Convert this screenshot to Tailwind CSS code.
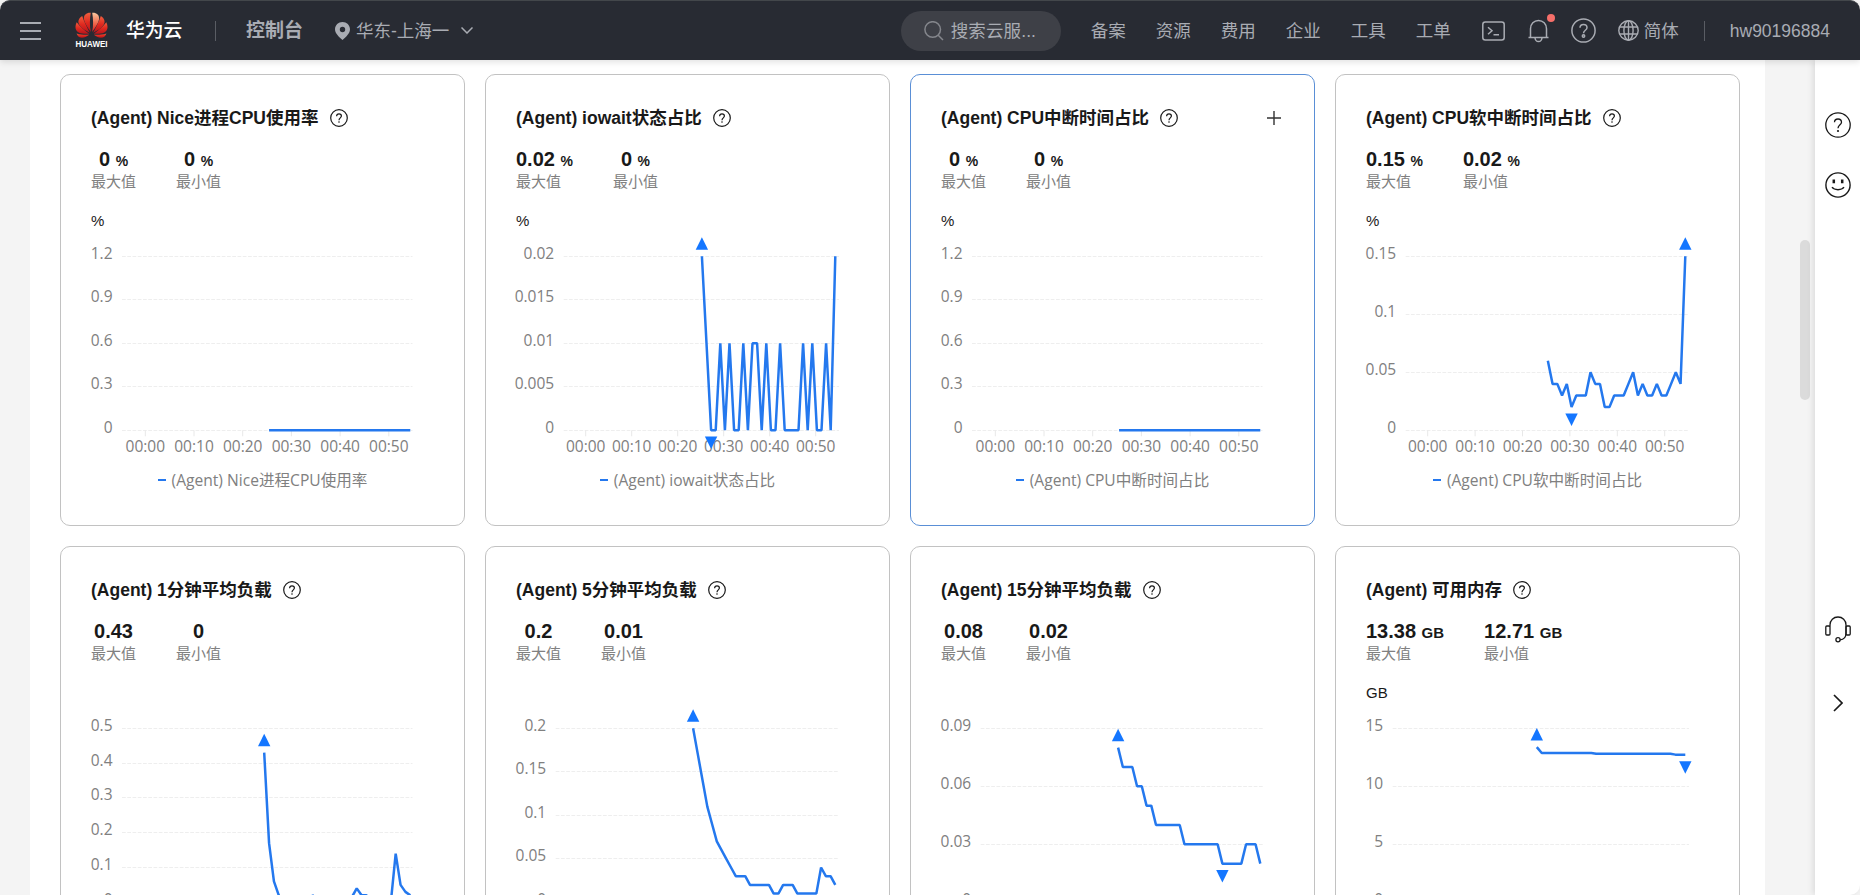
<!DOCTYPE html>
<html lang="zh-CN">
<head>
    <meta charset="UTF-8">
    <meta name="viewport" content="width=device-width, initial-scale=1.0">
    <title>云监控服务 - 控制台</title>
    <script src="https://cdn.jsdelivr.net/npm/@tailwindcss/browser@4"></script>
    <style>
        body {
            font-family: 'Liberation Sans', 'Noto Sans CJK SC', sans-serif;
        }
    </style>
</head>
<body class="h-screen overflow-hidden bg-[#f4f4f4] text-[#191919]">
<div class="flex h-[895px] flex-col overflow-hidden">

    <!-- 顶部导航 -->
    <header class="relative z-10 flex h-[60px] shrink-0 items-center rounded-t-[10px] border-t border-[#43474b] bg-[#282b33] text-[17.5px] leading-6 text-[#a9acb3] shadow-[0_2px_6px_rgba(0,0,0,0.12)]">
        <svg class="ml-5 h-[18px] w-[21px] shrink-0" viewBox="0 0 21 18" stroke="#a9acb3" stroke-width="2"><path d="M0 1h21M0 9h21M0 17h21"/></svg>
        <!-- 品牌标志 -->
        <svg class="ml-[34px] h-[38px] w-[33px] shrink-0" viewBox="0 1.5 33 38">
            <defs>
                <linearGradient id="petal" x1="0" y1="0" x2="0" y2="1"><stop offset="0" stop-color="#f0603f"/><stop offset=".5" stop-color="#e02a20"/><stop offset="1" stop-color="#b8131a"/></linearGradient>
                <linearGradient id="petalLight" x1="0" y1="0" x2="0" y2="1"><stop offset="0" stop-color="#fbc9a0"/><stop offset=".6" stop-color="#ee5f45"/><stop offset="1" stop-color="#cf1d1d"/></linearGradient>
            </defs>
            <g fill="url(#petal)">
                <path d="M15.900 21.600C14.400 15 14.800 8 15.800 2.200C11.800 1.800 8.400 4.200 8.900 8.500C9.500 12.500 13 17.500 15.900 21.600Z"/>
                <path d="M14.800 22.200C11.900 16.500 9 11 7.200 5.400C3.200 7.800 2.300 11.500 4.800 15C7 18 11.500 20.700 14.800 22.200Z"/>
                <path d="M14.200 23.200C9.800 20.300 5 16 1.700 11.800C-.5 16.300 .3 20.300 3.700 22C6.900 23.500 11 23.500 14.200 23.200Z"/>
                <path d="M14.200 24.200C10.500 24.600 5.500 24.300 1.600 22.900C2.400 25.600 4.500 27.200 7 27.200C9.700 27.100 12.300 25.600 14.200 24.200Z"/>
                <path d="M18.200 22.200C21.100 16.500 24 11 25.800 5.400C29.800 7.800 30.700 11.500 28.200 15C26 18 21.500 20.700 18.200 22.200Z"/>
                <path d="M18.800 23.200C23.200 20.300 28 16 31.300 11.800C33.500 16.300 32.700 20.300 29.300 22C26.100 23.500 22 23.500 18.800 23.200Z"/>
                <path d="M18.800 24.200C22.500 24.600 27.500 24.300 31.400 22.900C30.600 25.600 28.500 27.200 26 27.200C23.300 27.100 20.700 25.600 18.800 24.200Z"/>
            </g>
            <path fill="url(#petalLight)" d="M17.100 21.600C18.600 15 18.200 8 17.200 2.200C21.200 1.800 24.600 4.200 24.100 8.500C23.500 12.500 20 17.500 17.100 21.600Z"/>
            <text x="16.500" y="36" font-size="8.200" font-weight="700" fill="#fff" text-anchor="middle" textLength="32" lengthAdjust="spacingAndGlyphs">HUAWEI</text>
        </svg>
        <span class="ml-[18px] w-[57px] text-[18.8px] font-medium whitespace-nowrap text-white">华为云</span>
        <span class="ml-8 h-5 w-px bg-[#5a5d64]"></span>
        <span class="ml-[30px] w-[58px] text-[19px] font-bold whitespace-nowrap">控制台</span>
        <svg class="ml-[31px] h-[18px] w-[15px] shrink-0" viewBox="0 0 15 18" fill="#a9acb3"><path fill-rule="evenodd" d="M7.500 0C3.300 0 0 3.200 0 7.300C0 11.300 3.600 14.700 7.500 18C11.400 14.700 15 11.300 15 7.300C15 3.200 11.700 0 7.500 0ZM7.500 4.800a2.700 2.700 0 1 0 0 5.400a2.700 2.700 0 0 0 0-5.400Z"/></svg>
        <span class="ml-[6px] w-[94px] whitespace-nowrap">华东-上海一</span>
        <svg class="ml-[11px] h-[7px] w-[12px] shrink-0" viewBox="0 0 12 7" fill="none" stroke="#a9acb3" stroke-width="1.500"><path d="M.5 .5L6 6L11.500 .5"/></svg>

        <div class="mr-[30px] ml-auto flex h-10 w-40 shrink-0 items-center rounded-full bg-[#3e4047]">
            <svg class="ml-[23px] h-5 w-5 shrink-0" viewBox="0 0 20 20" fill="none" stroke="#84868c" stroke-width="1.500"><circle cx="8.700" cy="8.500" r="7.800"/><path d="M14.200 14.200L19 19"/></svg>
            <span class="ml-[7px] tracking-[0.1px] whitespace-nowrap">搜索云服...</span>
        </div>
        <nav class="flex gap-[30px] whitespace-nowrap">
            <span>备案</span><span>资源</span><span>费用</span><span>企业</span><span>工具</span><span>工单</span>
        </nav>
        <svg class="ml-[31px] h-5 w-[23px] shrink-0" viewBox="0 0 23 20" fill="none" stroke="#a9acb3" stroke-width="1.500"><rect x=".8" y="1" width="21.400" height="18" rx="2.500"/><path d="M6 6.200L10 9.700L6 13.200M11.500 13.800H17"/></svg>
        <div class="relative ml-[23px] h-6 w-[21px] shrink-0">
            <svg class="h-6 w-[21px]" viewBox="0 0 21 24" fill="none" stroke="#a9acb3" stroke-width="1.500"><path d="M.5 18.500H20.500M2.500 18.300V9.800C2.500 5 6 1.500 10.500 1.500S18.500 5 18.500 9.800V18.300M7 19C7.300 21.200 8.600 22.500 10.500 22.500S13.700 21.200 14 19"/></svg>
            <span class="absolute -top-[5px] left-[19px] h-2 w-2 rounded-full bg-[#f66f6a]"></span>
        </div>
        <svg class="ml-[22px] h-[25px] w-[25px] shrink-0" viewBox="0 0 25 25" fill="none" stroke="#a9acb3" stroke-width="1.500"><circle cx="12.500" cy="12.500" r="11.600"/><path d="M9 9.800C9 7.800 10.500 6.500 12.500 6.500S16 7.800 16 9.700C16 12.300 12.500 12.300 12.500 15.300"/><circle cx="12.500" cy="18" r="1.200"/></svg>
        <svg class="ml-[22px] h-[21px] w-[21px] shrink-0" viewBox="0 0 21 21" fill="none" stroke="#a9acb3" stroke-width="1.400"><circle cx="10.500" cy="10.500" r="9.700"/><ellipse cx="10.500" cy="10.500" rx="4.600" ry="9.700"/><path d="M10.500 .8V20.200M1.600 7H19.400M1.600 14H19.400"/></svg>
        <span class="ml-[5px] whitespace-nowrap">简体</span>
        <span class="ml-[25px] h-5 w-px bg-[#5a5d64]"></span>
        <span class="mr-[30px] ml-[25px]">hw90196884</span>
    </header>

    <div class="flex min-h-0 flex-1">
        <main class="ml-[30px] w-[1735px] shrink-0 overflow-hidden bg-white pt-[14px] pl-[30px]">
            <div id="cards" class="grid grid-cols-[repeat(4,405px)] gap-5"></div>
        </main>
        <!-- 滚动条 -->
        <div class="w-[50px] shrink-0 pt-[180px] pl-[35px]">
            <div class="h-40 w-[10px] rounded-full bg-[#dbdbdb]"></div>
        </div>
        <!-- 右侧工具栏 -->
        <aside class="flex w-[45px] shrink-0 flex-col items-center rounded-br-[10px] bg-white shadow-[-2px_0_6px_rgba(0,0,0,0.1)]">
            <svg class="mt-[52px] h-[26px] w-[26px]" viewBox="0 0 26 26" fill="none" stroke="#191919" stroke-width="1.300"><circle cx="13" cy="13" r="12.200"/><path d="M9.500 10.300C9.500 8.200 11 7 13 7S16.500 8.200 16.500 10.200C16.500 12.700 13 12.700 13 16.200"/><circle cx="13" cy="19" r="1.100" fill="#191919" stroke="none"/></svg>
            <svg class="mt-[34px] h-[26px] w-[26px]" viewBox="0 0 26 26" fill="none" stroke="#191919" stroke-width="1.400"><circle cx="13" cy="13" r="12.100"/><path d="M7 15.200C8.300 17 10.400 17.700 13 17.700S17.700 17 19 15.200"/><path stroke-width="2.500" d="M8.800 7.500V11.200M17.200 7.500V11.200"/></svg>
            <svg class="mt-[418px] h-[27px] w-[26px]" viewBox="0 0 26 27" fill="none" stroke="#191919" stroke-width="1.300"><rect x=".8" y="10" width="4.200" height="9" rx="1"/><rect x="21" y="10" width="4.200" height="9" rx="1"/><path d="M5 10.500V9C5 4.300 8.500 1 13 1S21 4.300 21 9V17C21 21 18.800 23.600 15 23.800"/><circle cx="13" cy="23.800" r="2.100"/></svg>
            <svg class="mt-[51px] h-[18px] w-[10px]" viewBox="0 0 10 18" fill="none" stroke="#191919" stroke-width="1.700"><path d="M1 1L9 9L1 17"/></svg>
        </aside>
    </div>
</div>

<script>
    // 坐标轴尺寸：left/right 为网格范围，first/gap 为时间刻度，step 为每分钟的像素
    const AXIS_S = { left: 31, right: 321.5, first: 54.3, gap: 48.7, step: 4.87 };
    const AXIS_M = { left: 39.7, right: 323, first: 61.7, gap: 47.4, step: 4.74 };
    const AXIS_L = { left: 47.7, right: 323, first: 69.7, gap: 46, step: 4.6 };
    const AXIS_XS = { left: 26.7, right: 323, first: 50, gap: 49.5, step: 4.95 };

    const LAST_X = 319.3;
    const TOP_Y = 24.3;
    const PLOT_H = 174;

    const zeros = n => Array(n).fill(0);

    const metrics = [
        { name: 'Nice进程CPU使用率', unit: '%', max: '0', min: '0', axis: AXIS_S, ticks: ['1.2', '0.9', '0.6', '0.3', '0'], data: zeros(30) },
        { name: 'iowait状态占比', unit: '%', max: '0.02', min: '0', axis: AXIS_L, ticks: ['0.02', '0.015', '0.01', '0.005', '0'], up: 0, down: 2,
          data: [.02, .01, 0, 0, .01, 0, .01, 0, 0, .01, 0, .01, .01, 0, .01, 0, 0, .01, 0, 0, 0, 0, .01, 0, .01, 0, 0, .01, 0, .02] },
        { name: 'CPU中断时间占比', unit: '%', max: '0', min: '0', axis: AXIS_S, ticks: ['1.2', '0.9', '0.6', '0.3', '0'], data: zeros(30), active: true },
        { name: 'CPU软中断时间占比', unit: '%', max: '0.15', min: '0.02', axis: AXIS_M, ticks: ['0.15', '0.1', '0.05', '0'], up: 29, down: 5,
          data: [.06, .04, .04, .03, .04, .02, .03, .03, .03, .05, .04, .04, .02, .02, .03, .03, .03, .04, .05, .03, .04, .03, .03, .04, .03, .03, .04, .05, .04, .15] },
        { name: '1分钟平均负载', unit: '', max: '0.43', min: '0', axis: AXIS_S, ticks: ['0.5', '0.4', '0.3', '0.2', '0.1', '0'], up: 0,
          data: [.43, .17, .06, .02, 0, 0, 0, 0, 0, 0, .02, 0, 0, 0, 0, 0, 0, 0, .015, .04, .02, .02, 0, 0, 0, 0, 0, .14, .05, .03, .02] },
        { name: '5分钟平均负载', unit: '', max: '0.2', min: '0.01', axis: AXIS_M, ticks: ['0.2', '0.15', '0.1', '0.05', '0'], up: 0,
          data: [.2, .17, .14, .11, .09, .07, .06, .05, .04, .03, .03, .03, .02, .02, .02, .02, .02, .01, .01, .02, .02, .02, .01, .01, .01, .01, .01, .04, .03, .03, .02] },
        { name: '15分钟平均负载', unit: '', max: '0.08', min: '0.02', axis: AXIS_M, ticks: ['0.09', '0.06', '0.03', '0'], up: 0, down: 22,
          data: [.08, .07, .07, .07, .06, .06, .05, .05, .04, .04, .04, .04, .04, .04, .03, .03, .03, .03, .03, .03, .03, .03, .02, .02, .02, .02, .02, .03, .03, .03, .02] },
        { name: '可用内存', unit: 'GB', max: '13.38', min: '12.71', axis: AXIS_XS, ticks: ['15', '10', '5', '0'], up: 0, down: 30,
          data: [13.38, ...Array(11).fill(12.87), ...Array(16).fill(12.8), 12.73, 12.71, 12.71] }
    ];

    // 绘制折线图
    function chart(m) {
        const a = m.axis;
        const top = Number(m.ticks[0]);
        const px = i => LAST_X - (m.data.length - 1 - i) * a.step;
        const py = v => TOP_Y + PLOT_H * (1 - v / top);
        const bottom = TOP_Y + PLOT_H;
        let svg = '';

        m.ticks.forEach((t, i) => {
            const y = Math.floor(TOP_Y + PLOT_H * i / (m.ticks.length - 1)) + 0.5;
            svg += `<line x1="${a.left}" x2="${a.right}" y1="${y}" y2="${y}" stroke="#eeeeee" stroke-dasharray="3.75 1.5"/>`;
            svg += `<text x="${a.left - 9.5}" y="${y + 2.7}" text-anchor="end">${t}</text>`;
        });
        ['00:00', '00:10', '00:20', '00:30', '00:40', '00:50'].forEach((t, i) => {
            const x = a.first + a.gap * i;
            svg += `<line x1="${x}" x2="${x}" y1="${bottom}" y2="${bottom + 6}" stroke="#e8e8e8"/>`;
            svg += `<text x="${x}" y="${bottom + 21.3}" text-anchor="middle">${t}</text>`;
        });

        const points = m.data.map((v, i) => `${px(i).toFixed(2)},${py(v).toFixed(2)}`).join(' ');
        svg += `<polyline points="${points}" fill="none" stroke="#2478ee" stroke-width="2.5" stroke-linejoin="bevel"/>`;

        // 最大值与最小值标记
        if (m.up !== undefined) {
            const x = px(m.up), y = py(m.data[m.up]);
            svg += `<polygon fill="#1476ff" points="${x - 6.2},${y - 6.5} ${x + 6.2},${y - 6.5} ${x},${y - 19}"/>`;
        }
        if (m.down !== undefined) {
            const x = px(m.down), y = py(m.data[m.down]);
            svg += `<polygon fill="#1476ff" points="${x - 6.2},${y + 6.3} ${x + 6.2},${y + 6.3} ${x},${y + 18.8}"/>`;
        }
        return `<svg class="h-[232px] w-[343px] overflow-visible fill-[#808080] font-['Open_Sans'] text-[15.5px]" viewBox="0 0 343 232">${svg}</svg>`;
    }

    function stat(value, unit, label) {
        const unitSize = unit === '%' ? 'text-[14px]' : 'text-[15px]';
        return `<div>
            <p class="h-6 text-center text-xl leading-6 font-bold whitespace-pre">${value}${unit ? ` <span class="${unitSize}">${unit}</span>` : ''}</p>
            <p class="text-[15px] leading-[22px] text-[#808080]">${label}</p>
        </div>`;
    }

    document.getElementById('cards').innerHTML = metrics.map(m => `
        <section class="h-[452px] rounded-[10px] border px-[30px] pt-[31px] ${m.active ? 'border-[#5a8fd6]' : 'border-[#c2c2c2]'}">
            <div class="flex h-6 items-center text-[17.5px] leading-6 font-bold">
                <h3 class="whitespace-nowrap">(Agent) ${m.name}</h3>
                <svg class="ml-[11px] h-[18px] w-[18px]" viewBox="0 0 18 18" fill="none" stroke="#191919" stroke-width="1.2"><circle cx="9" cy="9" r="8.300"/><path d="M6.600 7.200C6.600 5.700 7.600 4.900 9 4.900S11.400 5.700 11.400 7.100C11.400 8.900 9 8.900 9 11.200"/><circle cx="9" cy="13" r=".8" fill="#191919" stroke="none"/></svg>
                ${m.active ? '<svg class="mr-[3px] ml-auto h-[14px] w-[14px]" viewBox="0 0 14 14" stroke="#333" stroke-width="1.400"><path d="M7 0V14M0 7H14"/></svg>' : ''}
            </div>
            <div class="mt-[17px] flex gap-10">
                ${stat(m.max, m.unit, '最大值')}
                ${stat(m.min, m.unit, '最小值')}
            </div>
            <p class="mt-[18px] h-[21px] text-[15px] leading-5">${m.unit}</p>
            ${chart(m)}
            <div class="mt-1 flex h-6 items-center justify-center gap-[6px] font-['Open_Sans','Noto_Sans_CJK_SC'] text-[15.6px] leading-6 whitespace-nowrap text-[#808080]">
                <span class="h-[2.5px] w-[8px] bg-[#2478ee]"></span>
                <span>(Agent) ${m.name}</span>
            </div>
        </section>`).join('');
</script>
</body>
</html>
